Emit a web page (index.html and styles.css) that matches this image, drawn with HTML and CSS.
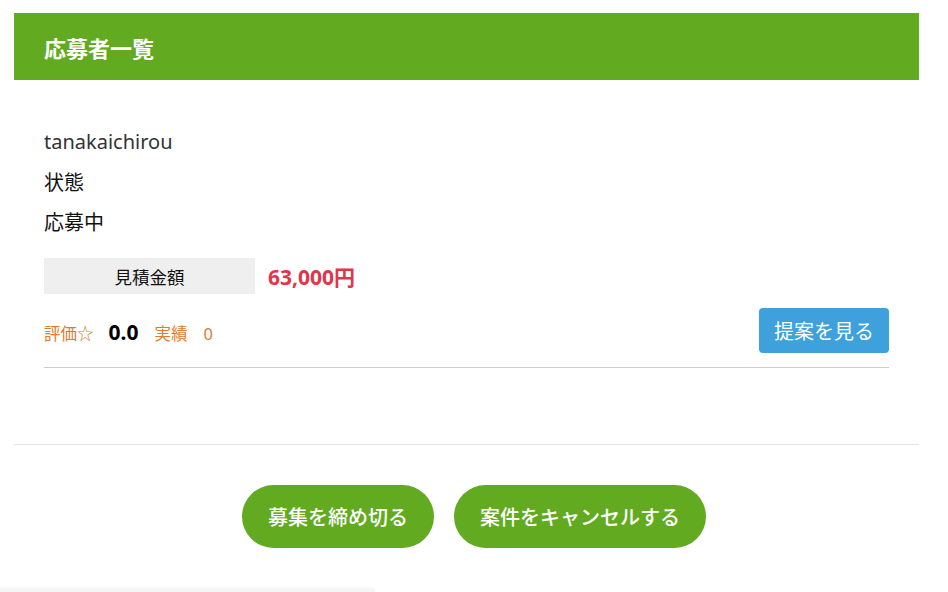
FILE: index.html
```html
<!DOCTYPE html>
<html lang="ja">
<head>
<meta charset="utf-8">
<title>応募者一覧</title>
<link rel="stylesheet" href="styles.css">
</head>
<body>
<div class="page">
  <section class="panel">
    <h2 class="panel-title">応募者一覧</h2>
    <div class="applicant">
      <p class="line name">tanakaichirou</p>
      <p class="line">状態</p>
      <p class="line">応募中</p>
      <div class="estimate">
        <div class="estimate-label">見積金額</div>
        <div class="estimate-value">63,000円</div>
      </div>
      <div class="meta-row">
        <div class="meta">
          <span class="meta-label">評価☆</span>
          <span class="meta-score">0.0</span>
          <span class="meta-label">実績</span>
          <span class="meta-count">0</span>
        </div>
        <a class="btn-view">提案を見る</a>
      </div>
    </div>
  </section>
  <div class="actions">
    <a class="btn-pill">募集を締め切る</a>
    <a class="btn-pill">案件をキャンセルする</a>
  </div>
</div>
<div class="floating"></div>
</body>
</html>
```
FILE: styles.css
```css
html, body {
  margin: 0;
  padding: 0;
  background: #fff;
}
html {
  overflow: hidden;
}
body {
  font-family: "Noto Sans", "Noto Sans CJK JP", sans-serif;
  color: #222;
  height: 592px;
  overflow: hidden;
  position: relative;
}
.page {
  margin: 13px 29px 0 14px;
}
.panel-title {
  margin: 0;
  height: 67px;
  background: #62aa1f;
  color: #fff;
  font-family: "Noto Sans CJK JP", sans-serif;
  font-size: 22px;
  font-weight: 700;
  display: flex;
  align-items: center;
  padding-left: 30px;
}
.applicant {
  padding: 48px 30px 0;
}
.line {
  margin: 0 0 13px;
  font-size: 20px;
  line-height: 27px;
  font-family: "Noto Sans CJK JP", sans-serif;
  color: #111;
}
.line.name {
  font-family: "Noto Sans", sans-serif;
  color: #333;
}
.estimate {
  display: flex;
  align-items: center;
  margin-top: 23px;
}
.estimate-label {
  width: 211px;
  height: 36px;
  background: #efefef;
  display: flex;
  align-items: center;
  justify-content: center;
  font-family: "Noto Sans CJK JP", sans-serif;
  font-size: 17.5px;
  color: #111;
}
.estimate-value {
  margin-left: 13px;
  color: #e0354a;
  font-weight: 700;
  font-size: 21px;
  font-family: "Noto Sans", "Noto Sans CJK JP", sans-serif;
}
.meta-row {
  display: flex;
  align-items: center;
  justify-content: space-between;
  margin-top: 14px;
  padding-bottom: 14px;
  border-bottom: 1px solid #cccccc;
}
.meta {
  display: flex;
  align-items: baseline;
  padding-top: 3px;
}
.meta-label {
  color: #e07b2c;
  font-size: 16.5px;
  font-family: "Noto Sans CJK JP", sans-serif;
}
.meta-score {
  font-weight: 700;
  font-size: 21px;
  color: #000;
  margin: 0 16px 0 15px;
}
.meta-count {
  color: #e07b2c;
  font-size: 16.5px;
  margin-left: 16px;
}
.btn-view {
  background: #3ea1db;
  color: #fff;
  border-radius: 4px;
  height: 45px;
  padding: 0 15px;
  display: flex;
  align-items: center;
  font-size: 20px;
  font-family: "Noto Sans CJK JP", sans-serif;
}
.panel {
  padding-bottom: 76px;
  border-bottom: 1px solid #e3e3e3;
}
.actions {
  display: flex;
  justify-content: center;
  gap: 20px;
  padding-top: 40px;
  margin: 0 -30px 0 -15px;
}
.btn-pill {
  background: #62aa1f;
  color: #fff;
  height: 63px;
  border-radius: 32px;
  padding: 0 26px;
  display: flex;
  align-items: center;
  font-size: 20px;
  font-weight: 500;
  font-family: "Noto Sans CJK JP", sans-serif;
}
.floating {
  position: absolute;
  left: 0;
  top: 589px;
  width: 375px;
  height: 3px;
  background: #f5f5f5;
  border-radius: 0 8px 0 0;
  box-shadow: 0 -1px 3px rgba(0,0,0,0.06);
}
```
